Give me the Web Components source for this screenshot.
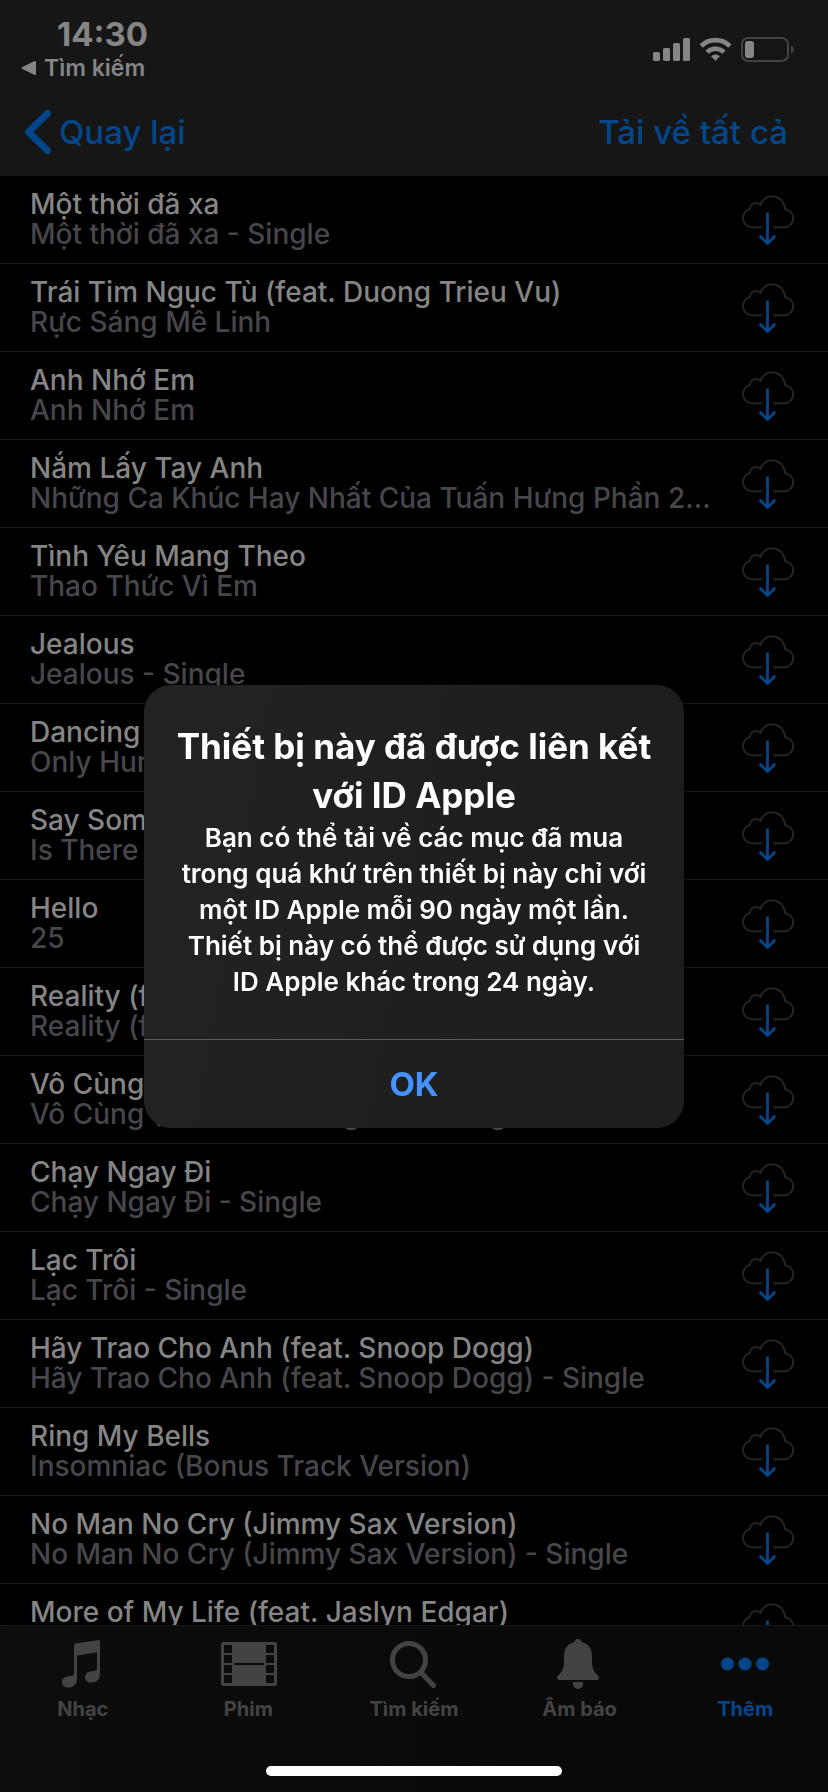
<!DOCTYPE html>
<html lang="vi">
<head>
<meta charset="utf-8">
<meta name="viewport" content="width=device-width, initial-scale=1">
<title>Đã mua</title>
<style>
    html, body {
        height: 100%;
    }

    body {
        margin: 0;
        background-color: #000;
        color: #858585;
        font-family: Inter, "Noto Sans", sans-serif;
        --blue: #05468a;
        --bar: #161616;
    }
</style>
</head>
<body>
<purchased-page></purchased-page>

<template id="status-bar">
    <style>
        :host {
            display: flex;
            justify-content: space-between;
            height: 88px;
            box-sizing: border-box;
            padding: 16px 34px 0 21px;
        }

        .time {
            margin-left: 36px;
            font-size: 33px;
            font-weight: 700;
            line-height: 36px;
        }

        .back {
            display: flex;
            align-items: center;
            gap: 8px;
            color: inherit;
            font-size: 23px;
            font-weight: 600;
            line-height: 32px;
            text-decoration: none;
        }

        .icons {
            display: flex;
            gap: 9px;
            padding-top: 21px;
        }
    </style>
    <div>
        <div class="time">14:30</div>
        <a class="back" href="#search">
            <svg width="15" height="16" viewBox="0 0 16 16" fill="currentColor"><path d="M1.5 7 14 .8q2-.8 2 1.2v12q0 2-2 1.2L1.5 9q-1.8-1 0-2z"/></svg>
            <span>Tìm kiếm</span>
        </a>
    </div>
    <div class="icons">
        <svg width="37" height="24" viewBox="0 0 37 24" fill="currentColor">
            <rect x="0" y="15" width="7" height="9" rx="1.5"/>
            <rect x="10" y="11" width="7" height="13" rx="1.5"/>
            <rect x="20" y="6" width="7" height="18" rx="1.5"/>
            <rect x="30" y="1" width="7" height="23" rx="1.5"/>
        </svg>
        <svg width="33" height="24" viewBox="0 0 33 24" fill="none" stroke="currentColor">
            <path d="M2.1 9a20.8 20.8 0 0 1 28.8 0" stroke-width="4.8"/>
            <path d="M8 15.1a12.3 12.3 0 0 1 17 0" stroke-width="4.6"/>
            <path d="M16.5 24 12 19.3q4.5-3.5 9 0z" fill="currentColor" stroke="none"/>
        </svg>
        <svg width="53" height="25" viewBox="0 0 53 25">
            <rect x="1" y="1" width="46" height="23" rx="6" fill="none" stroke="#434343" stroke-width="2"/>
            <rect x="4" y="4" width="9" height="17" rx="3" fill="currentColor"/>
            <path d="M50 8.5q3 1.3 3 4t-3 4z" fill="#434343"/>
        </svg>
    </div>
</template>

<template id="nav-bar">
    <style>
        :host {
            display: flex;
            justify-content: space-between;
            align-items: center;
            height: 88px;
            padding: 0 40px 0 24px;
            color: var(--blue);
        }

        a, button {
            display: flex;
            align-items: center;
            gap: 7px;
            padding: 0;
            border: 0;
            background: none;
            color: inherit;
            font-family: inherit;
            font-size: 33px;
            font-weight: 500;
            line-height: 40px;
            text-decoration: none;
            cursor: pointer;
        }
    </style>
    <a href="#back">
        <svg width="28" height="44" viewBox="0 0 28 44" fill="none" stroke="currentColor" stroke-width="7" stroke-linecap="round" stroke-linejoin="round"><path d="M23.5 3.5 4.5 22l19 18.5"/></svg>
        <slot name="back"></slot>
    </a>
    <button type="button"><slot name="action"></slot></button>
</template>

<template id="song-row">
    <style>
        :host {
            display: flex;
            justify-content: space-between;
            align-items: center;
            box-sizing: border-box;
            flex: none;
            height: 88px;
            padding: 0 34px 0 30px;
            border-bottom: 1px solid #171718;
        }

        .text {
            min-width: 0;
            padding-bottom: 1px;
            font-size: 28px;
            font-weight: 500;
            line-height: 30px;
            white-space: nowrap;
        }

        .album {
            color: #47464b;
        }

        button {
            display: flex;
            padding: 0;
            border: 0;
            background: none;
            cursor: pointer;
        }
    </style>
    <div class="text">
        <div class="name"></div>
        <div class="album"></div>
    </div>
    <button type="button">
        <svg width="52" height="50" viewBox="0 0 52 50" fill="none">
            <path d="M20.5 32.3H10.5A9.3 9.3 0 0 1 1 23C1 18.5 4 15 8 14 8 10 11 7.7 14 8c1.8.2 3 .8 4.2 2C20.5 4.5 25 1.2 30 1.2 37 1.2 42.6 7 43 14c5 1 8.2 4.8 8.2 9.3a9 9 0 0 1-9.2 9H31" stroke="#242424" stroke-width="2"/>
            <path d="M25.5 17.5V48M17.7 40.800l7.8 7.7 7.800-7.700" stroke="#05468a" stroke-width="2.8"/>
        </svg>
    </button>
</template>

<template id="tab-item">
    <style>
        :host {
            display: block;
            flex: 1;
            color: #434343;
        }

        :host([active]) {
            color: var(--blue);
        }

        a {
            display: flex;
            flex-direction: column;
            align-items: center;
            gap: 7px;
            color: inherit;
            font-size: 20px;
            font-weight: 700;
            line-height: 24px;
            text-decoration: none;
        }
    </style>
    <a href="#tab">
        <svg width="60" height="52" viewBox="0 0 60 52" fill="currentColor"></svg>
        <slot></slot>
    </a>
</template>

<template id="tab-bar">
    <style>
        :host {
            display: block;
            padding: 12px 0 16px;
            border-top: 1px solid #191919;
            background: linear-gradient(90deg, #0d0d0d, #0a0a0a 60%);
        }

        nav {
            display: flex;
        }

        .home {
            width: 296px;
            height: 10px;
            margin: 45px auto 0;
            border-radius: 5px;
            background-color: #fff;
        }
    </style>
    <nav><slot></slot></nav>
    <div class="home"></div>
</template>

<template id="alert-box">
    <style>
        :host {
            position: fixed;
            inset: 0;
            display: flex;
            align-items: center;
            justify-content: center;
            padding: 21px 32px 0;
        }

        .box {
            width: 540px;
            border-radius: 27px;
            background: linear-gradient(100deg, #232323, #1e1e1e 70%);
            color: #fff;
            text-align: center;
            overflow: hidden;
        }

        .body {
            padding: 37px 32px 39px;
        }

        h1 {
            margin: 0;
            font-size: 35px;
            font-weight: 700;
            line-height: 49px;
        }

        p {
            margin: 0;
            font-size: 26px;
            font-weight: 600;
            line-height: 36px;
        }

        button {
            display: block;
            width: 100%;
            height: 89px;
            padding: 0;
            border: 0;
            border-top: 1px solid #5c5c5c;
            background: none;
            color: #4593fd;
            font-family: inherit;
            font-size: 33px;
            font-weight: 700;
            cursor: pointer;
        }
    </style>
    <div class="box" role="alertdialog" aria-labelledby="title" aria-describedby="message">
        <div class="body">
            <h1 id="title"><slot name="title"></slot></h1>
            <p id="message"><slot name="message"></slot></p>
        </div>
        <button type="button">OK</button>
    </div>
</template>

<template id="purchased-page">
    <style>
        :host {
            display: flex;
            flex-direction: column;
            height: 100vh;
            overflow: hidden;
        }

        header {
            flex: none;
            background-color: var(--bar);
        }

        main {
            display: flex;
            flex-direction: column;
            flex: 1;
            min-height: 0;
            overflow: hidden;
        }
    </style>
    <header>
        <status-bar></status-bar>
        <nav-bar>
            <span slot="back">Quay lại</span>
            <span slot="action">Tải về tất cả</span>
        </nav-bar>
    </header>
    <main></main>
    <tab-bar>
        <tab-item icon="music">Nhạc</tab-item>
        <tab-item icon="film">Phim</tab-item>
        <tab-item icon="search">Tìm kiếm</tab-item>
        <tab-item icon="bell">Âm báo</tab-item>
        <tab-item icon="more" active>Thêm</tab-item>
    </tab-bar>
    <alert-box>
        <span slot="title">Thiết bị này đã được liên kết với ID Apple</span>
        <span slot="message">Bạn có thể tải về các mục đã mua trong quá khứ trên thiết bị này chỉ với một ID Apple mỗi 90 ngày một lần. Thiết bị này có thể được sử dụng với ID Apple khác trong 24 ngày.</span>
    </alert-box>
</template>

<script>
const songs = [
    ['Một thời đã xa', 'Một thời đã xa - Single'],
    ['Trái Tim Ngục Tù (feat. Duong Trieu Vu)', 'Rực Sáng Mê Linh'],
    ['Anh Nhớ Em', 'Anh Nhớ Em'],
    ['Nắm Lấy Tay Anh', 'Những Ca Khúc Hay Nhất Của Tuấn Hưng Phần 2...'],
    ['Tình Yêu Mang Theo', 'Thao Thức Vì Em'],
    ['Jealous', 'Jealous - Single'],
    ['Dancing On My Own', 'Only Human'],
    ['Say Something', 'Is There Anybody Out There?'],
    ['Hello', '25'],
    ['Reality (feat. Janieck Devy)', 'Reality (feat. Janieck Devy) - Single'],
    ['Vô Cùng (Vì Anh Thương Em)', 'Vô Cùng (Vì Anh Thương Em) - Single'],
    ['Chạy Ngay Đi', 'Chạy Ngay Đi - Single'],
    ['Lạc Trôi', 'Lạc Trôi - Single'],
    ['Hãy Trao Cho Anh (feat. Snoop Dogg)', 'Hãy Trao Cho Anh (feat. Snoop Dogg) - Single'],
    ['Ring My Bells', 'Insomniac (Bonus Track Version)'],
    ['No Man No Cry (Jimmy Sax Version)', 'No Man No Cry (Jimmy Sax Version) - Single'],
    ['More of My Life (feat. Jaslyn Edgar)', ''],
];

const icons = {
    music: '<path d="M21 7.5Q21 6 22.6 5.6L46 2q1-.2 1 1V36c0 5-3.5 8.5-8.5 8.5-4 0-6.5-2.2-6.5-5.3 0-3.7 3.2-5.6 6.5-6l3-.3q2.5-.3 2.5-2.4V14.2L24 17.5V41c0 5-3.5 8.6-8.5 8.6C11.5 49.6 9 47.5 9 44.3c0-3.6 3-5.6 6.5-6l3-.3q2.5-.3 2.5-2.5z"/>',
    film: '<path fill-rule="evenodd" d="M5.5 4h51q2.5 0 2.5 2.5v39q0 2.5-2.5 2.5h-51Q3 48 3 45.5v-39Q3 4 5.5 4zM6 7v8h8V7zm0 10v8h8v-8zm0 10v8h8v-8zm0 10v8h8v-8zM48 7v8h8V7zm0 10v8h8v-8zm0 10v8h8v-8zm0 10v8h8v-8zM16 25v2h30v-2z"/>',
    search: '<g fill="none" stroke="currentColor" stroke-width="5" stroke-linecap="round"><circle cx="25" cy="22" r="16.5"/><path d="M37 34.5 49.5 47.5"/></g>',
    bell: '<path d="M28 1c2 0 3.2 1.2 3.4 3C38 5.500 42 10.500 42 18v4c0 8 1.5 11.5 5.5 15 2.5 2.3 1.5 5-1 5h-37c-2.5 0-3.5-2.7-1-5 4-3.5 5.5-7 5.5-15v-4c0-7.5 4-12.5 10.6-14C24.8 2.2 26 1 28 1z"/><path d="M23 44h10v2a5 5 0 0 1-10 0z"/>',
    more: '<circle cx="12.5" cy="26" r="6.5"/><circle cx="30" cy="26" r="6.5"/><circle cx="47.5" cy="26" r="6.5"/>',
};

class BaseElement extends HTMLElement {
    constructor() {
        super();
        const template = document.getElementById(this.localName);
        this._shadowRoot = this.attachShadow({ mode: 'open' });
        this._shadowRoot.appendChild(template.content.cloneNode(true));
    }
}

class StatusBar extends BaseElement {}

class NavBar extends BaseElement {}

class SongRow extends BaseElement {
    connectedCallback() {
        const name = this.getAttribute('name');
        this._shadowRoot.querySelector('.name').textContent = name;
        this._shadowRoot.querySelector('.album').textContent = this.getAttribute('album') || '\u00a0';
        this._shadowRoot.querySelector('button').setAttribute('aria-label', `Tải về ${name}`);
    }
}

class TabItem extends BaseElement {
    connectedCallback() {
        this._shadowRoot.querySelector('svg').innerHTML = icons[this.getAttribute('icon')];
    }
}

class TabBar extends BaseElement {}

class AlertBox extends BaseElement {
    constructor() {
        super();
        this.$button = this._shadowRoot.querySelector('button');
        this.$button.addEventListener('click', this.onButton.bind(this));
    }

    onButton() {
        this.remove();
    }
}

class PurchasedPage extends BaseElement {
    constructor() {
        super();
        this.$list = this._shadowRoot.querySelector('main');
        songs.forEach(([name, album]) => {
            const row = document.createElement('song-row');
            row.setAttribute('name', name);
            row.setAttribute('album', album);
            this.$list.appendChild(row);
        });
    }
}

customElements.define('status-bar', StatusBar);
customElements.define('nav-bar', NavBar);
customElements.define('song-row', SongRow);
customElements.define('tab-item', TabItem);
customElements.define('tab-bar', TabBar);
customElements.define('alert-box', AlertBox);
customElements.define('purchased-page', PurchasedPage);
</script>
</body>
</html>
